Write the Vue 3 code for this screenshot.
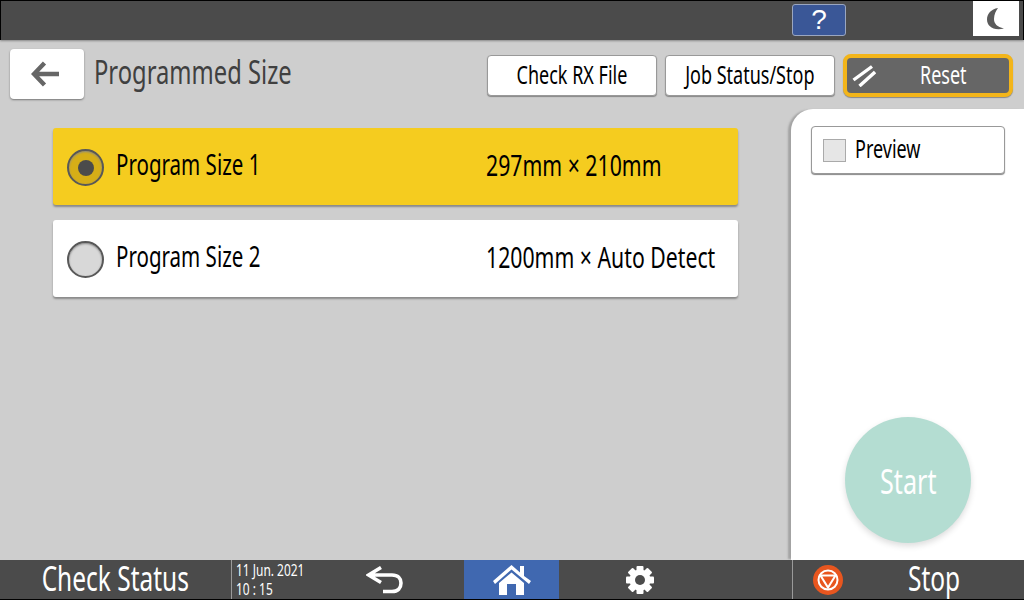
<script setup>
const items = [
  { name: 'Program Size 1', size: '297mm × 210mm', selected: true },
  { name: 'Program Size 2', size: '1200mm × Auto Detect', selected: false },
]
</script>

<template>
  <div class="screen">
    <header class="topbar">
      <button class="help">?</button>
      <button class="night">
        <svg width="20" height="24" viewBox="0 0 20 24"><path d="M12 1 C5 2 1 7 1 12.5 C1 19 7 24 18 21.5 C11 20 8 16.5 8 12 C8 7.5 10 3.5 12 1 Z" fill="#5a5a5a"/></svg>
      </button>
    </header>

    <main class="main">
      <div class="head">
        <button class="back">
          <svg width="28" height="26" viewBox="0 0 28 26"><path d="M13.5 2 L3 13 L13.5 24 M3 13 H28" fill="none" stroke="#666" stroke-width="4.4"/></svg>
        </button>
        <h1 class="title"><span class="nw">Programmed Size</span></h1>
        <div class="actions">
          <button class="btn"><span class="nw mid">Check RX File</span></button>
          <button class="btn"><span class="nw mid">Job Status/Stop</span></button>
          <button class="reset">
            <svg class="reset-icon" width="24" height="22" viewBox="0 0 24 22"><path d="M1.5 15 L20 1.5 M7.5 21 L23 7" fill="none" stroke="#fff" stroke-width="3.4"/></svg>
            <span class="reset-label nw">Reset</span>
          </button>
        </div>
      </div>

      <div class="body">
        <section class="list">
          <div v-for="item in items" :key="item.name" class="row" :class="{ selected: item.selected }">
            <span class="radio"><span v-if="item.selected" class="dot"></span></span>
            <span class="name"><span class="nw">{{ item.name }}</span></span>
            <span class="size"><span class="nw">{{ item.size }}</span></span>
          </div>
        </section>
        <aside class="side">
          <label class="preview"><span class="check"></span><span class="nw">Preview</span></label>
          <button class="start"><span class="nw mid">Start</span></button>
        </aside>
      </div>
    </main>

    <footer class="footer">
      <div class="status"><span class="nw mid">Check Status</span></div>
      <div class="clock"><span class="nw">11 Jun. 2021</span><span class="nw">10 : 15</span></div>
      <div class="nav undo">
        <svg width="38" height="28" viewBox="0 0 38 28"><path d="M15 1.5 L2.5 9 L15 16.5 M3 9 H26 C32 9 35 12.5 35 17 C35 22 32 25.5 26 25.5 H17" fill="none" stroke="#fff" stroke-width="3.6"/></svg>
      </div>
      <div class="nav home">
        <svg width="38" height="30" viewBox="0 0 38 30"><path d="M0 16 L18.5 0 L27 7.5 V1 H31 V11 L38 16 L36 19 L18.5 4.5 L2 19 Z M18.5 7.5 L31 18 V30 H23 V19 H14 V30 H6 V18 Z" fill="#fff"/></svg>
      </div>
      <div class="nav gear-cell">
        <svg width="30" height="30" viewBox="0 0 30 30"><g fill="#fff"><circle cx="15" cy="15" r="10.5"/><rect x="11.5" y="1" width="7" height="28" rx="1"/><rect x="11.5" y="1" width="7" height="28" rx="1" transform="rotate(45 15 15)"/><rect x="11.5" y="1" width="7" height="28" rx="1" transform="rotate(90 15 15)"/><rect x="11.5" y="1" width="7" height="28" rx="1" transform="rotate(135 15 15)"/></g><circle cx="15" cy="15" r="5" fill="#4b4b4b"/></svg>
      </div>
      <div class="stop">
        <svg width="30" height="30" viewBox="0 0 30 30"><circle cx="15" cy="15" r="15" fill="#e8561f"/><circle cx="15" cy="15" r="9.5" fill="none" stroke="#fff" stroke-width="2"/><path d="M7.5 10.5 H22.5 L15 22.5 Z" fill="none" stroke="#fff" stroke-width="2"/></svg>
        <span class="stop-label nw">Stop</span>
      </div>
    </footer>
  </div>
</template>

<style scoped>
* { box-sizing: border-box; }
.screen {
  width: 1024px; height: 600px; display: flex; flex-direction: column; overflow: hidden;
  background: #cecece; color: #000;
  font-family: "Noto Sans", "Open Sans", sans-serif;
}
button { font: inherit; color: inherit; padding: 0; cursor: pointer; }
.nw {
  display: inline-block; white-space: nowrap; flex: none;
  transform: scaleX(.72); transform-origin: left center;
}
.nw.mid { transform-origin: center; }
.topbar {
  height: 40px; flex: none; background: #4b4b4b; border: solid #000; border-width: 1px 1px 0;
  display: flex; align-items: flex-start; padding-top: 3px;
  box-shadow: 0 1px 2px #888;
}
.help {
  margin-left: 791px; width: 54px; height: 32px; background: #3a5797; color: #fff;
  border: 1px solid #9aa6c0; border-radius: 3px; font-size: 28px; line-height: 28px;
  font-family: "Liberation Sans", sans-serif;
}
.night {
  margin-left: 127px; width: 46px; height: 35px; margin-top: -3px; background: #fff; border: 0;
  display: flex; align-items: center; justify-content: center;
}
.main { flex: 1; display: flex; flex-direction: column; min-height: 0; }
.head { height: 69px; flex: none; display: flex; align-items: flex-start; padding: 9px 11px 0 10px; }
.back {
  width: 74px; height: 50px; background: #fff; border: 0; border-radius: 4px; padding-right: 5px;
  box-shadow: 0 1px 2px #777; display: flex; align-items: center; justify-content: center;
}
.title { margin: 3px 0 0 10px; font-size: 33px; line-height: 40px; font-weight: 400; color: #404040; }
.actions { margin-left: auto; display: flex; gap: 8px; align-items: flex-start; padding-top: 6px; }
.btn {
  width: 170px; height: 41px; background: #fff; border: 1px solid #999; border-radius: 4px;
  box-shadow: 0 1px 1px #888; font-size: 25px; line-height: 36px;
  display: flex; justify-content: center; align-items: flex-start;
}
.reset {
  width: 170px; height: 43px; margin-top: -1px; background: #666; color: #fff; border: 4px solid #f3b51a;
  border-radius: 8px; display: flex; align-items: center; font-size: 25px; box-shadow: 0 1px 1px #888;
}
.reset-icon { margin-left: 5px; flex: none; }
.reset-label { margin: 0 0 2px 44px; line-height: 33px; }
.body { flex: 1; display: flex; min-height: 0; }
.list { width: 791px; flex: none; padding: 19px 53px 0; display: flex; flex-direction: column; gap: 15px; }
.row {
  height: 77px; background: #fff; border-radius: 3px; box-shadow: 0 2px 2px #8a8a8a;
  display: flex; align-items: center; padding: 2px 0 0 14px; font-size: 28.5px;
}
.row.selected { background: #f5cc1f; }
.radio {
  width: 37px; height: 37px; border-radius: 50%; background: #d8d8d8; border: 2px solid #585858;
  display: flex; align-items: center; justify-content: center; flex: none;
  box-shadow: inset 0 1px 2px #888;
}
.selected .radio { background: #d6ae17; }
.dot { width: 16px; height: 16px; border-radius: 50%; background: #4b4b4b; }
.name { margin: 0 0 7px 12px; width: 370px; flex: none; }
.size { flex: none; margin-bottom: 7px; font-size: 29.5px; }
.side {
  width: 233px; flex: none; background: #fff; border-top-left-radius: 22px;
  box-shadow: -4px 0 2px -1px #a3a3a3; padding: 17px 19px 17px 20px;
  display: flex; flex-direction: column; align-items: flex-start;
}
.preview {
  width: 194px; height: 48px; border: 1px solid #999; border-radius: 4px; background: #fff;
  box-shadow: 0 1px 1px #888; display: flex; align-items: center; gap: 9px; padding-left: 11px; font-size: 25px;
  line-height: 42px;
}
.check { width: 23px; height: 23px; background: #e6e6e6; border: 1px solid #aaa; flex: none; }
.preview .nw { margin-top: -4px; }
.start {
  margin: auto 0 0 34px; width: 126px; height: 126px; border-radius: 50%; border: 0;
  background: #b4ddd2; color: #fff; font-size: 35px; box-shadow: 0 3px 6px #ddd;
  display: flex; align-items: center; justify-content: center;
}
.footer {
  height: 40px; flex: none; background: #4b4b4b; color: #fff; display: flex; align-items: stretch;
  border-bottom: 1px solid #000; z-index: 1;
}
.status { width: 231px; flex: none; display: flex; justify-content: center; font-size: 34px; line-height: 36px; }
.clock {
  width: 115px; flex: none; border-left: 1px solid #9a9a9a; padding: 1px 0 0 4px; font-size: 16.6px; line-height: 18.5px;
  display: flex; flex-direction: column; align-items: flex-start;
}
.nav { display: flex; align-items: center; justify-content: center; flex: none; }
.undo { width: 118px; padding-right: 41px; }
.home { width: 95px; background: #4068b0; }
.gear-cell { width: 233px; padding-right: 71px; }
.stop { flex: 1; border-left: 1px solid #9a9a9a; display: flex; align-items: center; padding-left: 20px; font-size: 34px; }
.stop svg { flex: none; }
.stop-label { margin: 0 0 3px 65px; line-height: 36px; }
</style>
